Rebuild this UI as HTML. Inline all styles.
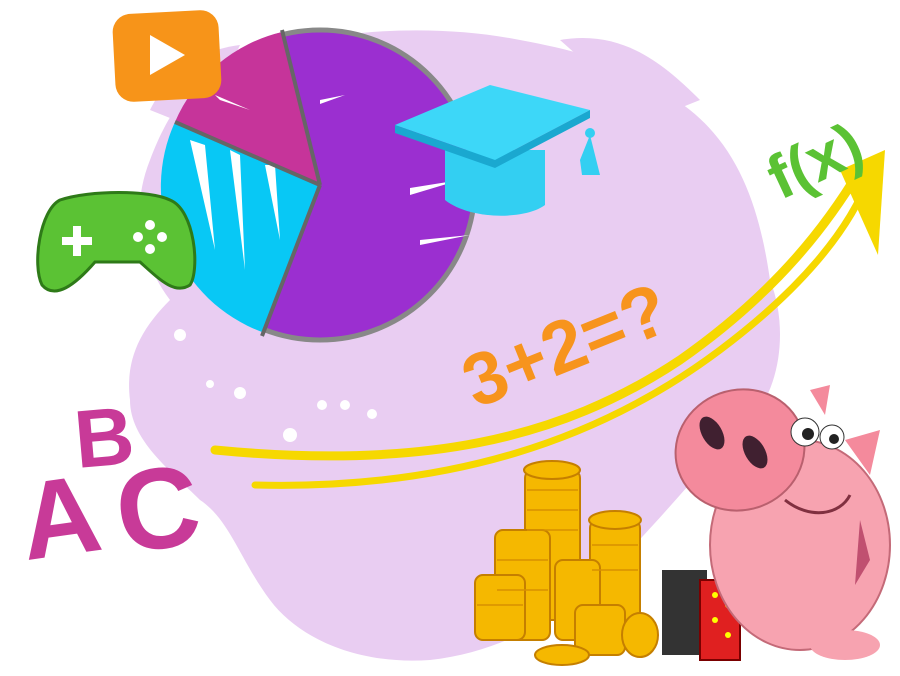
<!DOCTYPE html>
<html><head><meta charset="utf-8"><style>
html,body{margin:0;padding:0;background:#fff;width:900px;height:676px;overflow:hidden}
svg{display:block}
</style></head><body>
<svg width="900" height="676" viewBox="0 0 900 676" xmlns="http://www.w3.org/2000/svg">
<path d="M200 80 C280 30 420 20 520 40 C600 55 640 70 690 110 C740 150 760 210 770 280 C790 330 780 400 740 430 C700 470 660 520 620 560 C580 600 520 650 430 660 C360 665 300 640 270 600 C240 560 230 520 200 500 C170 470 130 440 130 400 C125 360 140 330 170 300 C140 260 130 210 150 160 C165 120 180 100 200 80 Z" fill="#e9cdf2"/>
<path d="M560 40 C620 30 660 60 700 100 L650 120 Z" fill="#e9cdf2"/>
<path d="M150 110 C170 70 200 50 240 45 L200 130 Z" fill="#e9cdf2"/>
<circle cx="180" cy="335" r="6" fill="#fff"/><circle cx="240" cy="393" r="6" fill="#fff"/>
<circle cx="210" cy="384" r="4" fill="#fff"/><circle cx="322" cy="405" r="5" fill="#fff"/>
<circle cx="345" cy="405" r="5" fill="#fff"/><circle cx="372" cy="414" r="5" fill="#fff"/>
<circle cx="290" cy="435" r="7" fill="#fff"/>
<circle cx="320" cy="185" r="155" fill="#9b2fd0" stroke="#888" stroke-width="5"/>
<path d="M320 185 L282 32 A155 155 0 0 0 175 122 Z" fill="#c6349a"/>
<path d="M320 185 L175 122 A155 155 0 0 0 262 332 Z" fill="#08c8f5"/>
<path d="M190 140 L215 250 L205 145 Z M230 150 L245 270 L240 155 Z M265 165 L280 240 L275 165 Z M215 95 L250 110 L220 100Z" fill="#fff"/>
<path d="M410 195 L460 180 L410 188 Z M420 245 L470 235 L420 240Z M320 100 L345 95 L320 104Z" fill="#fff"/>
<line x1="282" y1="30" x2="320" y2="185" stroke="#666" stroke-width="4"/>
<line x1="175" y1="122" x2="320" y2="185" stroke="#666" stroke-width="4"/>
<line x1="320" y1="185" x2="262" y2="336" stroke="#666" stroke-width="4"/>
<rect x="114" y="12" width="106" height="88" rx="18" fill="#f79419" transform="rotate(-3 167 56)"/>
<path d="M150 35 L150 75 L185 55 Z" fill="#fff"/>
<path d="M60 200 C90 190 150 190 170 200 C195 210 200 270 190 285 C175 295 160 280 140 262 L95 262 C75 285 55 300 42 285 C32 265 40 210 60 200 Z" fill="#5bc234" stroke="#2e7a18" stroke-width="3"/>
<rect x="62" y="237" width="30" height="8" fill="#fff"/><rect x="73" y="226" width="8" height="30" fill="#fff"/>
<circle cx="150" cy="225" r="5" fill="#fff"/><circle cx="150" cy="249" r="5" fill="#fff"/>
<circle cx="138" cy="237" r="5" fill="#fff"/><circle cx="162" cy="237" r="5" fill="#fff"/>
<path d="M445 150 L445 200 C470 220 525 220 545 205 L545 150 Z" fill="#33cff2"/>
<path d="M395 125 L490 85 L590 110 L495 160 Z" fill="#3dd7f8"/>
<path d="M395 125 L495 160 L590 110 L590 118 L495 168 L395 133Z" fill="#1aa8d0"/>
<path d="M580 160 L590 135 L600 175 L582 175Z" fill="#33cff2"/><circle cx="590" cy="133" r="5" fill="#33cff2"/>
<path d="M215 450 C420 470 560 440 680 360 C780 290 830 220 860 170" fill="none" stroke="#f6d800" stroke-width="9" stroke-linecap="round"/>
<path d="M255 485 C450 490 600 440 720 350 C800 290 850 230 870 175" fill="none" stroke="#f6d800" stroke-width="7" stroke-linecap="round"/>
<path d="M840 170 L885 150 L878 255 Z" fill="#f6d800"/>
<text x="758" y="180" font-family="Liberation Sans, sans-serif" font-size="62" font-weight="bold" fill="#5bc234" transform="rotate(-25 815 140)">f(x)</text>
<text x="445" y="370" font-family="Liberation Sans, sans-serif" font-size="74" font-weight="bold" fill="#f7941d" transform="rotate(-22 560 310)">3+2=?</text>
<text x="18" y="555" font-family="Liberation Sans, sans-serif" font-size="110" font-weight="bold" fill="#c83a98" transform="rotate(-8 60 500)">A</text>
<text x="74" y="465" font-family="Liberation Sans, sans-serif" font-size="82" font-weight="bold" fill="#c83a98" transform="rotate(-5 110 430)">B</text>
<text x="115" y="548" font-family="Liberation Sans, sans-serif" font-size="115" font-weight="bold" fill="#c83a98" transform="rotate(-8 160 500)">C</text>
<g fill="#f5b800" stroke="#c57f00" stroke-width="2">
<rect x="525" y="470" width="55" height="150" rx="8"/>
<rect x="495" y="530" width="55" height="110" rx="8"/>
<rect x="475" y="575" width="50" height="65" rx="8"/>
<rect x="590" y="520" width="50" height="110" rx="8"/>
<rect x="555" y="560" width="45" height="80" rx="8"/>
<rect x="575" y="605" width="50" height="50" rx="8"/>
<ellipse cx="552" cy="470" rx="28" ry="9"/>
<ellipse cx="615" cy="520" rx="26" ry="9"/>
<ellipse cx="562" cy="655" rx="27" ry="10"/>
<ellipse cx="640" cy="635" rx="18" ry="22"/>
</g>
<g stroke="#d89000" stroke-width="1.5">
<line x1="527" y1="490" x2="578" y2="490"/><line x1="527" y1="510" x2="578" y2="510"/><line x1="527" y1="530" x2="578" y2="530"/>
<line x1="592" y1="545" x2="638" y2="545"/><line x1="592" y1="570" x2="638" y2="570"/><line x1="497" y1="560" x2="548" y2="560"/>
<line x1="497" y1="590" x2="548" y2="590"/><line x1="477" y1="605" x2="523" y2="605"/>
</g>
<rect x="662" y="570" width="45" height="85" fill="#333"/>
<rect x="700" y="580" width="40" height="80" fill="#e02020" stroke="#7a0000" stroke-width="2"/>
<circle cx="715" cy="595" r="3" fill="#ff0"/><circle cx="728" cy="605" r="3" fill="#ff0"/><circle cx="715" cy="620" r="3" fill="#ff0"/><circle cx="728" cy="635" r="3" fill="#ff0"/>
<ellipse cx="800" cy="545" rx="90" ry="105" fill="#f7a3b0" stroke="#c46a78" stroke-width="2"/>
<ellipse cx="845" cy="645" rx="35" ry="15" fill="#f7a3b0"/>
<path d="M810 390 L830 385 L825 415Z M845 440 L880 430 L870 475Z" fill="#f48a9c"/>
<ellipse cx="740" cy="450" rx="65" ry="60" fill="#f48a9c" stroke="#b9606e" stroke-width="2" transform="rotate(-20 740 450)"/>
<ellipse cx="712" cy="433" rx="10" ry="18" fill="#402030" transform="rotate(-30 712 433)"/>
<ellipse cx="755" cy="452" rx="10" ry="18" fill="#402030" transform="rotate(-30 755 452)"/>
<circle cx="805" cy="432" r="14" fill="#fff" stroke="#333"/><circle cx="832" cy="437" r="12" fill="#fff" stroke="#333"/>
<circle cx="808" cy="434" r="6" fill="#222"/><circle cx="834" cy="439" r="5" fill="#222"/>
<path d="M785 500 C810 520 840 515 850 495" fill="none" stroke="#803040" stroke-width="3"/>
<path d="M860 520 L870 560 L855 585 Z" fill="#c05070"/>
</svg>
</body></html>
